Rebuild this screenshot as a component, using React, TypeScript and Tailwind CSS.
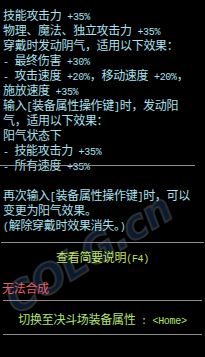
import React from "react";

const cjk = { fontFamily: '"Noto Sans CJK SC", "Noto Sans", sans-serif' };
const mono = { fontFamily: '"Liberation Mono", "DejaVu Sans Mono", monospace' };

function M({ children }: { children: React.ReactNode }) {
  return (
    <span className="text-[10px]" style={mono}>
      {children}
    </span>
  );
}

function Line({ children, className = "" }: { children?: React.ReactNode; className?: string }) {
  return (
    <div className={`h-[15px] leading-[15px] whitespace-nowrap ${className}`}>{children}</div>
  );
}

export default function App() {
  return (
    <div
      className="relative w-[205px] h-[357px] bg-black overflow-hidden text-[12px] tracking-[-0.3px] text-[#a9e1ee]"
      style={cjk}
    >
      {/* watermark */}
      <div
        aria-hidden="true"
        className="absolute left-[20px] top-[280px] h-[40px] w-[220px] pointer-events-none select-none text-[40px] font-black italic leading-[40px] opacity-35 text-[#1d4f86] -rotate-[32deg] origin-bottom-left"
        style={{ fontFamily: '"DejaVu Sans", sans-serif', WebkitTextStroke: "2px #7c8892" }}
      >
        COLG.cn
      </div>

      <div className="relative flex flex-col pt-[7px] px-[3px]">
        <Line>
          技能攻击力<M> +35%</M>
        </Line>
        <Line>
          物理、魔法、独立攻击力<M> +35%</M>
        </Line>
        <Line>穿戴时发动阴气，适用以下效果：</Line>
        <Line>
          <M>- </M>最终伤害<M> +30%</M>
        </Line>
        <Line>
          <M>- </M>攻击速度<M> +20%</M>，移动速度<M> +20%</M>，
        </Line>
        <Line>
          施放速度<M> +35%</M>
        </Line>
        <Line>
          输入<M>[</M>装备属性操作键<M>]</M>时，发动阳
        </Line>
        <Line>气，适用以下效果：</Line>
        <Line>阳气状态下</Line>
        <Line>
          <M>- </M>技能攻击力<M> +35%</M>
        </Line>
        <div className="relative">
          <Line>
            <M>- </M>所有速度<M> +35%</M>
          </Line>
          <div className="absolute left-[-3px] right-[7px] top-[8px] h-px bg-[#8c8c8c]" />
        </div>
        <Line />
        <Line>
          再次输入<M>[</M>装备属性操作键<M>]</M>时，可以
        </Line>
        <Line>变更为阳气效果。</Line>
        <Line>
          <M>(</M>解除穿戴时效果消失。<M>)</M>
        </Line>
      </div>

      <div className="relative mt-[10px] mx-[1px] h-px bg-[#8c8c8c]" />
      <div className="relative mt-[6px] text-center text-[#c3e262]">
        <Line>
          查看简要说明<M>(F4)</M>
        </Line>
      </div>
      <div className="relative mt-[16px] px-[2px] text-[#e4606a]">
        <Line>无法合成</Line>
      </div>
      <div className="relative mt-[5px] mx-[3px] h-px bg-[#8c8c8c]" />
      <div className="relative mt-[10px] text-center text-[#b0e36c]">
        <Line>
          切换至决斗场装备属性<M> : &lt;Home&gt;</M>
        </Line>
      </div>
      <div className="relative mt-[8px] mx-[3px] h-px bg-[#8c8c8c]" />
    </div>
  );
}
